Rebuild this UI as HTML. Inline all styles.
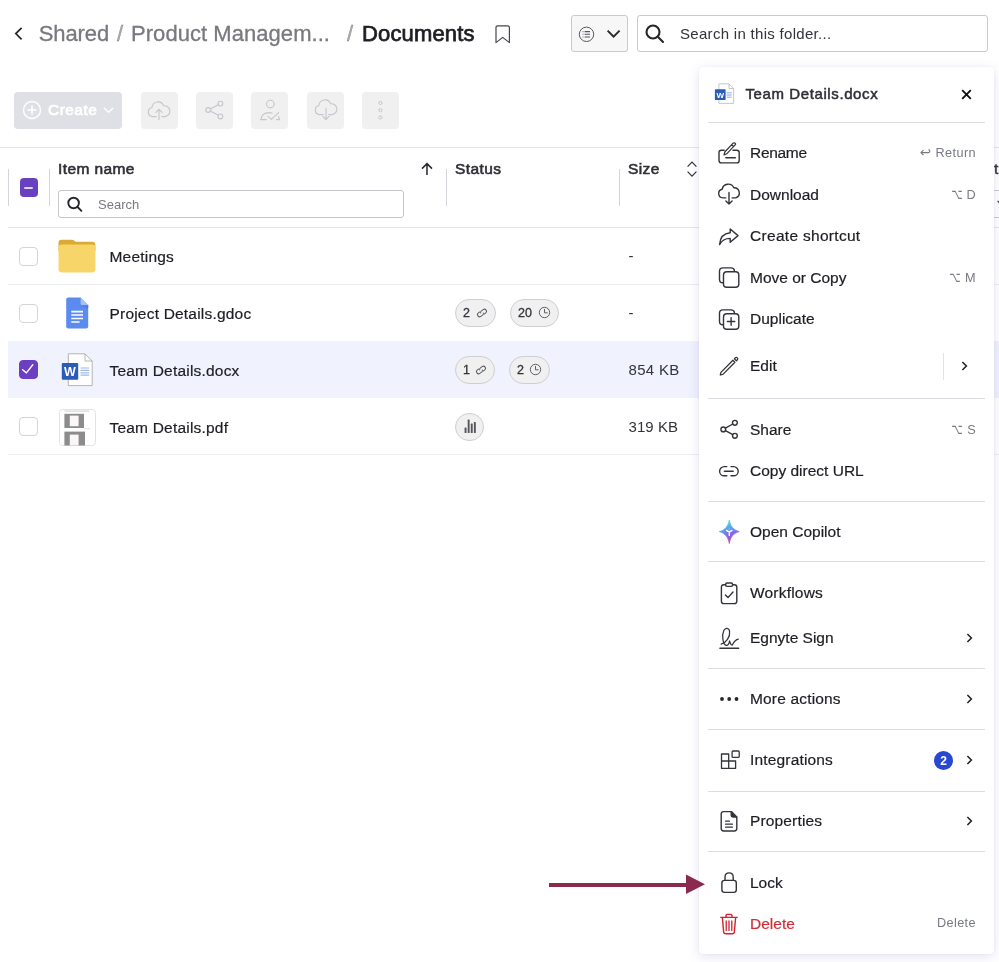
<!DOCTYPE html>
<html lang="en">
<head>
<meta charset="utf-8">
<title>Documents</title>
<style>
*{box-sizing:border-box;margin:0;padding:0}
html,body{width:999px;height:962px;overflow:hidden;background:#fff}
body{position:relative;will-change:transform;font-family:"Liberation Sans",sans-serif;color:#1d1e23;-webkit-font-smoothing:antialiased}
.a{position:absolute}
.t{position:absolute;white-space:nowrap;line-height:1}
svg{position:absolute;overflow:visible}
.bc{font-size:22px;color:#78797e;top:23px;-webkit-text-stroke:.3px #78797e}
.ibtn{position:absolute;top:91.5px;width:36.8px;height:37px;background:#f0f0f1;border-radius:4px}
.hl{position:absolute;background:#e4e4ea;height:1px}
.vl{position:absolute;background:#d4d5da;width:1px}
.cb{position:absolute;left:19px;width:19px;height:19px;border:1px solid #d3d4d9;border-radius:4px;background:#fff}
.nm{font-size:15.5px;left:109.5px;color:#1d1e23;letter-spacing:.2px;-webkit-text-stroke:.2px #1d1e23}
.pill{position:absolute;height:28px;border:1px solid #cfcfd2;background:#f0f0f1;border-radius:14px}
.pill .t{font-size:12.5px;top:7px;color:#33343a;-webkit-text-stroke:.3px #33343a}
.sz{font-size:15px;left:628.5px;margin-top:-1px;color:#33343a;letter-spacing:.3px}
#menu{position:absolute;left:699px;top:67px;width:295px;height:887px;background:#fff;border-radius:4px;box-shadow:0 3px 12px rgba(80,70,170,.15),0 0 2px rgba(80,70,170,.08);z-index:3}
#menu .sep{position:absolute;left:9px;width:277px;height:1px;background:#dcdce3}
#menu .mi{font-size:15.5px;left:51px;color:#1d1e23;-webkit-text-stroke:.2px}
#menu .kb{font-size:12.7px;color:#777a82;right:18px;margin-top:-.5px;letter-spacing:.4px}
#menu .sy{font-family:"DejaVu Sans",sans-serif;font-size:13.5px}
#menu .so{display:inline-block;transform:scale(.72,1.05);transform-origin:right 70%}
</style>
</head>
<body>

<!-- breadcrumb -->
<svg style="left:14px;top:26px" width="10" height="16" viewBox="0 0 10 16"><path d="M7.6 1.8 L1.8 7.6 L7.6 13.4" fill="none" stroke="#26272c" stroke-width="1.7"/></svg>
<div class="t bc" style="left:38.8px;letter-spacing:-.12px">Shared</div>
<div class="t bc" style="left:117px;color:#a9abb2">/</div>
<div class="t bc" style="left:131px;letter-spacing:.05px">Product Managem...</div>
<div class="t bc" style="left:347px;color:#a9abb2">/</div>
<div class="t bc" style="left:362px;color:#1d1e23;-webkit-text-stroke:.75px #1d1e23;letter-spacing:.15px">Documents</div>
<svg style="left:495px;top:25px" width="16" height="19" viewBox="0 0 16 19"><path d="M1 2.6 Q1 0.8 2.8 0.8 H12.6 Q14.4 0.8 14.4 2.6 V17.6 L7.7 12.4 L1 17.6 Z" fill="none" stroke="#45464c" stroke-width="1.2" stroke-linejoin="round"/></svg>

<!-- view toggle + search -->
<div class="a" style="left:571px;top:15px;width:57px;height:37px;border:1px solid #c9cad1;border-radius:3px;background:#f7f7f8"></div>
<div class="a" style="left:637px;top:15px;width:351px;height:37px;border:1px solid #c9cad1;border-radius:3px;background:#fff"></div>
<div class="t" style="left:680px;top:26px;font-size:15px;letter-spacing:.3px;color:#33343a">Search in this folder...</div>


<!-- view toggle / search icons -->
<svg style="left:578px;top:26px" width="17" height="17" viewBox="0 0 17 17" fill="none" stroke="#55575e" stroke-width="1"><circle cx="8.5" cy="8.3" r="7.2"/><path d="M6.6 5.6 H12 M6.6 8.3 H12 M6.6 11 H12" stroke-width="1.1"/><path d="M4.6 5.6 H5.4 M4.6 8.3 H5.4 M4.6 11 H5.4" stroke-width="1.1"/></svg>
<svg style="left:606px;top:29px" width="16" height="10" viewBox="0 0 16 10"><path d="M1.6 1.6 L7.6 7.6 L13.6 1.6" fill="none" stroke="#26272c" stroke-width="1.9"/></svg>
<svg style="left:644px;top:23px" width="22" height="22" viewBox="0 0 22 22" fill="none" stroke="#26272c" stroke-width="2.1" stroke-linecap="round"><circle cx="9" cy="9" r="6.5"/><path d="M13.8 13.8 L19 19"/></svg>

<!-- toolbar -->
<div class="a" style="left:14px;top:91.5px;width:108px;height:37px;background:#dfe0e6;border-radius:4px"></div>
<div class="t" style="left:48px;top:102px;font-size:15.5px;letter-spacing:.45px;-webkit-text-stroke:.65px #fff;color:#fff">Create</div>
<div class="ibtn" style="left:141px"></div>
<div class="ibtn" style="left:196.2px"></div>
<div class="ibtn" style="left:251.4px"></div>
<div class="ibtn" style="left:306.8px"></div>
<div class="ibtn" style="left:362.2px"></div>


<!-- toolbar icons -->
<svg style="left:21.2px;top:99px" width="22" height="22" viewBox="0 0 22 22"><circle cx="11" cy="11" r="8.5" fill="none" stroke="#fff" stroke-width="1.4"/><path d="M11 7 V15 M7 11 H15" stroke="#fff" stroke-width="1.5" fill="none" stroke-linecap="round"/></svg>
<svg style="left:103px;top:106px" width="12" height="8" viewBox="0 0 12 8"><path d="M1.4 2.2 L5.6 6.2 L9.8 2.2" fill="none" stroke="#fff" stroke-width="1.3" stroke-linecap="round" stroke-linejoin="round"/></svg>
<svg style="left:147px;top:98px" width="24" height="24" viewBox="0 0 24 24" fill="none" stroke="#c6c7cc" stroke-width="1.15" stroke-linecap="round" stroke-linejoin="round"><path d="M9.2 18.6 H5.8 A4.6 4.6 0 0 1 5 9.5 A6 6 0 0 1 16.6 7.8 A5.4 5.4 0 0 1 18.2 18.6 H14.8"/><path d="M12 21.4 V11.4 M8.9 14.4 L12 11.3 L15.1 14.4"/></svg>
<svg style="left:202px;top:98px" width="24" height="24" viewBox="0 0 24 24" fill="none" stroke="#c6c7cc" stroke-width="1.15"><circle cx="18.4" cy="5.6" r="2.4"/><circle cx="6.2" cy="12" r="2.4"/><circle cx="18.4" cy="18.4" r="2.4"/><path d="M8.3 10.9 L16.3 6.7 M8.3 13.1 L16.3 17.3"/></svg>
<svg style="left:258px;top:98px" width="24" height="24" viewBox="0 0 24 24" fill="none" stroke="#c6c7cc" stroke-width="1.15" stroke-linecap="round" stroke-linejoin="round"><circle cx="12.3" cy="6" r="3.8"/><path d="M3 21.6 C3.4 17.2 6.6 14.6 11 14.6 C12.2 14.6 13.2 14.8 14.2 15.2"/><path d="M3 21.6 H8.2 M10 18.4 L13.4 21.4 L20.6 14.6 M18.4 21.6 H21.4 C21.3 20.4 21 19.4 20.6 18.6"/></svg>
<svg style="left:313.5px;top:98px" width="24" height="24" viewBox="0 0 24 24" fill="none" stroke="#c6c7cc" stroke-width="1.15" stroke-linecap="round" stroke-linejoin="round"><path d="M9.2 16.6 H5.8 A4.6 4.6 0 0 1 5 7.5 A6 6 0 0 1 16.6 5.8 A5.4 5.4 0 0 1 18.2 16.6 H14.8"/><path d="M12 10.4 V21.4 M8.9 18.4 L12 21.5 L15.1 18.4"/></svg>
<svg style="left:368.2px;top:98px" width="24" height="24" viewBox="0 0 24 24" fill="none" stroke="#c6c7cc" stroke-width="1"><circle cx="12.4" cy="4.9" r="1.6"/><circle cx="12.4" cy="12.2" r="1.6"/><circle cx="12.4" cy="19.4" r="1.6"/></svg>

<!-- table header -->
<div class="hl" style="left:0;top:147px;width:999px"></div>
<div class="hl" style="left:8px;top:227px;width:991px"></div>
<div class="vl" style="left:8px;top:169px;height:37px"></div>
<div class="vl" style="left:49px;top:169px;height:37px"></div>
<div class="vl" style="left:446px;top:169px;height:37px"></div>
<div class="vl" style="left:619px;top:169px;height:37px"></div>
<div class="a" style="left:19.5px;top:178px;width:18.5px;height:19px;background:#6741bf;border-radius:4px"></div>
<div class="a" style="left:24px;top:187px;width:9px;height:1.5px;background:#ddd3f6;border-radius:1px"></div>
<div class="t" style="left:58px;top:161px;font-size:15.5px;letter-spacing:.4px;-webkit-text-stroke:.6px #2e2f35;color:#2e2f35">Item name</div>
<div class="a" style="left:58px;top:190px;width:346px;height:27.5px;border:1px solid #c4c5ca;border-radius:3px;background:#fff"></div>
<div class="t" style="left:98px;top:197.5px;font-size:13px;color:#777a82">Search</div>
<div class="t" style="left:455px;top:161px;font-size:15.5px;letter-spacing:.4px;-webkit-text-stroke:.6px #2e2f35;color:#2e2f35">Status</div>
<div class="t" style="left:628px;top:161px;font-size:15.5px;letter-spacing:.4px;-webkit-text-stroke:.6px #2e2f35;color:#2e2f35">Size</div>


<!-- header icons -->
<svg style="left:66px;top:196px" width="17" height="17" viewBox="0 0 17 17" fill="none" stroke="#26272c" stroke-width="1.9" stroke-linecap="round"><circle cx="7.6" cy="7" r="5.3"/><path d="M11.6 11 L15.4 14.8"/></svg>
<svg style="left:420px;top:162px" width="14" height="14" viewBox="0 0 14 14" fill="none" stroke="#26272c" stroke-width="1.5"><path d="M7 13 V2 M2 6.6 L7 1.6 L12 6.6"/></svg>
<svg style="left:686px;top:160px" width="12" height="18" viewBox="0 0 12 18" fill="none" stroke="#33343a" stroke-width="1.2"><path d="M1.6 6.6 L6 2 L10.4 6.6 M1.6 11.6 L6 16.2 L10.4 11.6"/></svg>


<!-- partially hidden column at right edge -->
<div class="t" style="left:994px;top:161px;font-size:15.5px;-webkit-text-stroke:.5px #33343a;color:#33343a">t</div>
<div class="a" style="left:960px;top:190px;width:60px;height:28px;border:1px solid #c9cad1;border-radius:3px;background:#fff"></div>
<svg style="left:996.5px;top:200px" width="8" height="6" viewBox="0 0 8 6"><path d="M0.6 0.8 L4 4.4 L7.4 0.8" fill="none" stroke="#33343a" stroke-width="1.2"/></svg>

<!-- rows -->
<div class="a" style="left:8px;top:341px;width:991px;height:57px;background:#f0f2fd"></div>
<div class="hl" style="left:8px;top:284px;width:991px;background:#ececf1"></div>
<div class="hl" style="left:8px;top:454px;width:991px;background:#ececf1"></div>

<div class="cb" style="top:247px"></div>
<div class="cb" style="top:304px"></div>
<div class="cb" style="top:360px;background:#6b3ec2;border-color:#6b3ec2"></div>
<div class="cb" style="top:417px"></div>

<div class="t nm" style="top:249px">Meetings</div>
<div class="t nm" style="top:306px">Project Details.gdoc</div>
<div class="t nm" style="top:363px">Team Details.docx</div>
<div class="t nm" style="top:420px">Team Details.pdf</div>

<div class="pill" style="left:455px;top:299px;width:41px"><div class="t" style="left:7px">2</div><svg style="left:20px;top:6.5px" width="12" height="12" viewBox="0 0 13 13" fill="none" stroke="#5a5b61" stroke-width="1.05" stroke-linecap="round"><g transform="rotate(-35 6.5 6.5)"><path d="M5.2 4.2 H3.4 A2.3 2.3 0 0 0 3.4 8.8 H5.6 A2.3 2.3 0 0 0 7.7 7.4"/><path d="M7.8 8.8 H9.6 A2.3 2.3 0 0 0 9.6 4.2 H7.4 A2.3 2.3 0 0 0 5.3 5.6"/></g></svg></div>
<div class="pill" style="left:510px;top:299px;width:49px"><div class="t" style="left:7px">20</div><svg style="left:27.2px;top:6px" width="13" height="13" viewBox="0 0 13 13" fill="none" stroke="#5e5f65" stroke-width="1"><circle cx="6.5" cy="6.5" r="5.2"/><path d="M6.5 3 V6.8 H9.6"/></svg></div>
<div class="pill" style="left:455px;top:356px;width:40px"><div class="t" style="left:7px">1</div><svg style="left:19px;top:6.5px" width="12" height="12" viewBox="0 0 13 13" fill="none" stroke="#5a5b61" stroke-width="1.05" stroke-linecap="round"><g transform="rotate(-35 6.5 6.5)"><path d="M5.2 4.2 H3.4 A2.3 2.3 0 0 0 3.4 8.8 H5.6 A2.3 2.3 0 0 0 7.7 7.4"/><path d="M7.8 8.8 H9.6 A2.3 2.3 0 0 0 9.6 4.2 H7.4 A2.3 2.3 0 0 0 5.3 5.6"/></g></svg></div>
<div class="pill" style="left:509px;top:356px;width:41px"><div class="t" style="left:7px">2</div><svg style="left:19.2px;top:6px" width="13" height="13" viewBox="0 0 13 13" fill="none" stroke="#5e5f65" stroke-width="1"><circle cx="6.5" cy="6.5" r="5.2"/><path d="M6.5 3 V6.8 H9.6"/></svg></div>
<div class="pill" style="left:455px;top:413px;width:29px;height:28px;border-radius:14px"><svg style="left:8px;top:5.2px" width="13" height="15" viewBox="0 0 13 15" fill="#55565c"><rect x="0.6" y="8.6" width="1.9" height="5.4" rx=".6"/><rect x="3.7" y="0.6" width="1.9" height="13.4" rx=".6"/><rect x="6.8" y="4.6" width="1.9" height="9.4" rx=".6"/><rect x="9.9" y="3" width="1.9" height="11" rx=".6"/></svg></div>

<div class="t sz" style="top:249px">-</div>
<div class="t sz" style="top:306px">-</div>
<div class="t sz" style="top:363px">854 KB</div>
<div class="t sz" style="top:420px;letter-spacing:.05px">319 KB</div>


<!-- file icons -->
<svg style="left:58px;top:239px" width="38" height="34" viewBox="0 0 38 34"><path d="M0.5 4 Q0.5 0.8 3.6 0.8 H13.6 Q15.4 0.8 16.6 2 L17.4 2.8 H34 Q37.4 2.8 37.4 6 V12 H0.5 Z" fill="#dcaa33"/><rect x="0.5" y="5.6" width="36.9" height="27.8" rx="3.4" fill="#f7d568"/></svg>
<svg style="left:66px;top:297px" width="23" height="32" viewBox="0 0 23 32"><path d="M2.2 0.6 H14.6 L22.2 8.2 V29.4 Q22.2 31.4 20.2 31.4 H2.2 Q0.2 31.4 0.2 29.4 V2.6 Q0.2 0.6 2.2 0.6 Z" fill="#5b8bef"/><path d="M14.6 0.6 L22.2 8.2 H16.4 Q14.6 8.2 14.6 6.4 Z" fill="#a6c1f7"/><path d="M14.6 8.2 H22.2 V11.4 Z" fill="#4a74d2" opacity=".7"/><path d="M5.3 14.6 H17 M5.3 18 H17 M5.3 21.5 H17 M5.3 25 H13.6" stroke="#fff" stroke-width="1.7"/></svg>
<svg style="left:61px;top:353px" width="33" height="34" viewBox="0 0 33 34"><path d="M7.3 0.8 H24 L31.2 8 V32.6 H7.3 Z" fill="#fff" stroke="#adadad" stroke-width="0.9" stroke-linejoin="round"/><path d="M24 0.8 V8 H31.2" fill="none" stroke="#adadad" stroke-width="0.9"/><path d="M19.6 15 H28.2 M19.6 17.4 H28.2 M19.6 19.8 H28.2 M19.6 22.2 H28.2" stroke="#9db9ea" stroke-width="1.2"/><rect x="0.8" y="10" width="16.4" height="16.8" rx="1" fill="#2b5cb8"/><text x="9" y="23" text-anchor="middle" font-family="Liberation Sans, sans-serif" font-weight="bold" font-size="12.5" fill="#fff">W</text></svg>
<svg style="left:59px;top:409px" width="37" height="37" viewBox="0 0 37 37"><defs><clipPath id="pc"><rect x="0.5" y="0.5" width="36" height="36" rx="3"/></clipPath></defs><rect x="0.5" y="0.5" width="36" height="36" rx="3" fill="#fff" stroke="#e3e3e6"/><g clip-path="url(#pc)"><rect x="5.4" y="1.6" width="25" height="1" fill="#cfcfcf"/><rect x="5.4" y="4.8" width="19.6" height="14.2" fill="#8c8c8c"/><rect x="10.8" y="6.6" width="8.8" height="10.6" fill="#fbf7f7"/><rect x="25" y="19.4" width="6" height="0.8" fill="#d8d8d8"/><rect x="5.4" y="22.6" width="20.6" height="15" fill="#8c8c8c"/><rect x="10.8" y="25.6" width="8.8" height="12" fill="#fbf7f7"/></g></svg>
<svg style="left:19px;top:360px" width="19" height="19" viewBox="0 0 19 19"><path d="M3.6 9.8 L7.4 12.9 L13.8 4.8" fill="none" stroke="#fff" stroke-width="1.4" stroke-linecap="round" stroke-linejoin="round"/></svg>

<!-- arrow annotation -->
<div class="a" style="left:549px;top:882.8px;width:140px;height:3.8px;background:#8b2a4f;z-index:5"></div>
<svg style="left:686px;top:874px;z-index:5" width="20" height="20" viewBox="0 0 20 20"><path d="M0 0.6 L19 10.3 L0 20 Z" fill="#8b2a4f"/></svg>

<!-- context menu -->
<div id="menu">
  <!-- menu icons (coords relative to menu at 699,67) -->
  <svg style="left:15px;top:16px" width="22" height="22" viewBox="0 0 22 22"><path d="M4.9 0.9 H15 L19.6 5.5 V20.4 H4.9 Z" fill="#fff" stroke="#b9b9b9" stroke-width="0.8" stroke-linejoin="round"/><path d="M15 0.9 V5.5 H19.6" fill="none" stroke="#b9b9b9" stroke-width="0.8"/><path d="M12.6 9.6 H17.6 M12.6 11.2 H17.6 M12.6 12.8 H17.6 M12.6 14.4 H17.6" stroke="#9db9ea" stroke-width="0.9"/><rect x="0.9" y="6.2" width="10.7" height="10.9" rx=".6" fill="#2b5cb8"/><text x="6.2" y="14.6" text-anchor="middle" font-family="Liberation Sans, sans-serif" font-weight="bold" font-size="8" fill="#fff">W</text></svg>
  <svg style="left:262px;top:22px" width="11" height="11" viewBox="0 0 11 11"><path d="M1.2 1.2 L9.8 9.8 M9.8 1.2 L1.2 9.8" stroke="#111" stroke-width="1.9" fill="none"/></svg>

  <svg style="left:18px;top:74px" width="24" height="24" viewBox="0 0 24 24" fill="none" stroke="#33343a" stroke-width="1.4" stroke-linecap="round" stroke-linejoin="round"><path d="M7.2 9.3 H4.4 Q2 9.3 2 11.7 V19.5 Q2 21.9 4.4 21.9 H19.8 Q22.2 21.9 22.2 19.5 V11.7 Q22.2 9.3 19.8 9.3 H16"/><path d="M8.8 16.7 H18.4"/><path d="M7 13.9 L7.8 11 L15.9 2.3 Q17.2 1.3 18.3 2.3 Q19.1 3.2 17.9 4.1 L9.7 12.8 Z M14.6 3.7 L16.5 5.5" stroke-width="1.2"/></svg>
  <svg style="left:18px;top:116px" width="24" height="24" viewBox="0 0 24 24" fill="none" stroke="#33343a" stroke-width="1.4" stroke-linecap="round" stroke-linejoin="round"><path d="M8.8 14.9 H5.8 A4.4 4.4 0 0 1 5.2 6.2 A6.1 6.1 0 0 1 16.8 4.8 A5.2 5.2 0 0 1 18.8 14.9 H15.2"/><path d="M12 9.4 V21 M8.9 18 L12 21.1 L15.1 18"/></svg>
  <svg style="left:19px;top:159.7px" width="22" height="20" viewBox="0 0 22 20" fill="none" stroke="#33343a" stroke-width="1.4" stroke-linecap="round" stroke-linejoin="round"><path d="M12.2 2 L20 8.6 L12.2 15.2 V11.4 C7.4 11.4 3.8 13.2 1.6 17.6 C2 11 5.8 6.4 12.2 5.8 Z"/></svg>
  <svg style="left:19px;top:199px" width="22" height="22" viewBox="0 0 22 22" fill="none" stroke="#33343a" stroke-width="1.4" stroke-linecap="round" stroke-linejoin="round"><path d="M4.8 16.8 Q1.5 16.6 1.5 13.4 V5.2 Q1.5 1.9 4.8 1.9 H13 Q16.2 1.9 16.5 5"/><rect x="5.5" y="5.7" width="15.3" height="15.6" rx="3.2"/></svg>
  <svg style="left:19px;top:240.5px" width="22" height="22" viewBox="0 0 22 22" fill="none" stroke="#33343a" stroke-width="1.4" stroke-linecap="round" stroke-linejoin="round"><path d="M4.8 16.8 Q1.5 16.6 1.5 13.4 V5.2 Q1.5 1.9 4.8 1.9 H13 Q16.2 1.9 16.5 5"/><rect x="5.5" y="5.7" width="15.3" height="15.6" rx="3.2"/><path d="M13.1 9.8 V17.2 M9.4 13.5 H16.8"/></svg>
  <svg style="left:19px;top:288px" width="22" height="22" viewBox="0 0 22 22" fill="none" stroke="#33343a" stroke-linecap="round" stroke-linejoin="round" stroke-width="1.25"><path d="M2.3 20 L2.9 17.4 L14.9 5.2 L16.9 7.2 L4.9 19.4 Z"/><path d="M16.4 3.8 L17.4 2.8 Q18.4 2 19.4 2.9 Q20.2 3.8 19.4 4.8 L18.4 5.8 Z"/></svg>

  <svg style="left:19px;top:351px" width="22" height="22" viewBox="0 0 22 22" fill="none" stroke="#33343a" stroke-width="1.4" stroke-linecap="round" stroke-linejoin="round"><circle cx="16.9" cy="4.8" r="2.4"/><circle cx="5.3" cy="11.4" r="2.4"/><circle cx="16.9" cy="17.8" r="2.4"/><path d="M7.4 10.2 L14.8 6 M7.4 12.6 L14.8 16.6"/></svg>
  <svg style="left:19px;top:396.8px" width="22" height="14" viewBox="0 0 22 14" fill="none" stroke="#33343a" stroke-width="1.4" stroke-linecap="round" stroke-linejoin="round"><path d="M8.8 2.6 H6.2 A4.6 4.6 0 0 0 6.2 11.8 H8.8 M13 2.6 H15.6 A4.6 4.6 0 0 1 15.6 11.8 H13 M6.4 7.2 H15.2"/></svg>
  <svg style="left:18px;top:452px" width="24" height="26" viewBox="0 0 24 26"><defs><linearGradient id="cg" gradientUnits="userSpaceOnUse" x1="9" y1="1" x2="15.5" y2="24.4"><stop offset="0" stop-color="#4fe2e4"/><stop offset=".36" stop-color="#58a2f0"/><stop offset=".6" stop-color="#7f6af2"/><stop offset=".8" stop-color="#a653c6"/><stop offset="1" stop-color="#cf3d55"/></linearGradient></defs><path d="M12.3 0.9 C13.2 6.6 16.2 11 22.2 12.6 C16.2 14.2 13.2 18.6 12.3 24.4 C11.4 18.6 8.4 14.2 2.4 12.6 C8.4 11 11.4 6.6 12.3 0.9 Z" fill="url(#cg)" stroke="url(#cg)" stroke-width=".8" stroke-linejoin="round"/><path d="M12.3 13 V16.4 M9.6 11.4 L12.3 13.2 L15 11.4" stroke="#fff" stroke-width="1.4" stroke-linecap="round" fill="none"/><circle cx="12.3" cy="10" r=".6" fill="#fff" opacity=".7"/></svg>

  <svg style="left:20px;top:513.9px" width="20" height="24" viewBox="0 0 20 24" fill="none" stroke="#33343a" stroke-width="1.4" stroke-linecap="round" stroke-linejoin="round"><path d="M6.6 3.8 H4.8 Q2.4 3.8 2.4 6.2 V20.2 Q2.4 22.6 4.8 22.6 H15.4 Q17.8 22.6 17.8 20.2 V6.2 Q17.8 3.8 15.4 3.8 H13.6"/><rect x="6.6" y="2" width="7" height="3.4" rx="1.4"/><path d="M6.4 14 L9 16.6 L14 11"/></svg>
  <svg style="left:19px;top:558px" width="22" height="26" viewBox="0 0 22 26" fill="none" stroke="#33343a" stroke-width="1.4" stroke-linecap="round" stroke-linejoin="round"><path d="M2 23.3 H20.6" stroke-width="1.6"/><path d="M3.2 19.2 C8 17.6 12.4 12 11.6 6.6 C11.2 2.6 7.4 2.2 5.8 5.6 C3.6 10.6 4.8 19.6 8.4 20.4 C10.4 20.6 11.2 18 11.6 15.8 C12 18 13 20.4 14.4 20 C15.6 17 17.6 15 20.3 14.2" stroke-width="1.25"/></svg>
  <svg style="left:19px;top:626px" width="22" height="12" viewBox="0 0 22 12" fill="#26272c"><circle cx="4" cy="6" r="1.9"/><circle cx="11.2" cy="6" r="1.9"/><circle cx="18.5" cy="6" r="1.9"/></svg>
  <svg style="left:20px;top:681px" width="22" height="22" viewBox="0 0 22 22" fill="none" stroke="#33343a" stroke-width="1.3" stroke-linejoin="round"><path d="M2.5 6 H9.7 V13 H16.6 V20.3 H2.5 Z M2.5 13 H9.7 V20.3"/><rect x="13.1" y="3" width="7.1" height="6.4" rx="1"/></svg>
  <svg style="left:20px;top:742px" width="20" height="24" viewBox="0 0 20 24" fill="none" stroke="#33343a" stroke-width="1.4" stroke-linecap="round" stroke-linejoin="round"><path d="M4.6 2.6 H12.4 L17.8 8 V19.6 Q17.8 22 15.4 22 H4.6 Q2.2 22 2.2 19.6 V5 Q2.2 2.6 4.6 2.6 Z"/><path d="M12.2 2.8 V5.8 Q12.2 8 14.4 8 H17.6" fill="#33343a"/><path d="M6.6 12.2 H10.4 M6.6 15.2 H13.4 M6.6 18.2 H13.4" stroke-width="1.3"/></svg>
  <svg style="left:20px;top:803px" width="20" height="24" viewBox="0 0 20 24" fill="none" stroke="#33343a" stroke-width="1.4" stroke-linecap="round" stroke-linejoin="round"><rect x="2.9" y="10.4" width="14.4" height="12" rx="2.6"/><path d="M6 10.2 V7.2 Q6 2.9 10.1 2.9 Q14.2 2.9 14.2 7.2 V10.2"/></svg>
  <svg style="left:20px;top:845px" width="20" height="24" viewBox="0 0 20 24" fill="none" stroke="#d0222f" stroke-width="1.4" stroke-linecap="round" stroke-linejoin="round"><path d="M1.8 5.4 H18.2 M7 5.2 V3.6 Q7 2.4 8.2 2.4 H11.8 Q13 2.4 13 3.6 V5.2"/><path d="M3.4 5.6 L4.6 19.8 Q4.8 21.8 6.8 21.8 H13.2 Q15.2 21.8 15.4 19.8 L16.6 5.6"/><path d="M7.2 8.8 V18.4 M10 8.8 V18.4 M12.8 8.8 V18.4" stroke-width="1.3"/></svg>

  <div class="t" style="left:46.5px;top:19px;font-size:15px;letter-spacing:.6px;-webkit-text-stroke:.5px #2e2f35;color:#2e2f35">Team Details.docx</div>
  <div class="sep" style="top:55px"></div>
  <div class="t mi" style="top:78px;letter-spacing:-.3px">Rename</div>
  <div class="t kb" style="top:79px"><span class="sy">↩</span> Return</div>
  <div class="t mi" style="top:120px">Download</div>
  <div class="t kb" style="top:121px"><span class="sy so">⌥</span> D</div>
  <div class="t mi" style="top:161px;letter-spacing:.3px">Create shortcut</div>
  <div class="t mi" style="top:203px">Move or Copy</div>
  <div class="t kb" style="top:204px"><span class="sy so">⌥</span> M</div>
  <div class="t mi" style="top:244px">Duplicate</div>
  <div class="t mi" style="top:291px">Edit</div>
  <div class="sep" style="top:331px"></div>
  <div class="t mi" style="top:355px">Share</div>
  <div class="t kb" style="top:356px"><span class="sy so">⌥</span> S</div>
  <div class="t mi" style="top:396px">Copy direct URL</div>
  <div class="sep" style="top:433.5px"></div>
  <div class="t mi" style="top:457px">Open Copilot</div>
  <div class="sep" style="top:494px"></div>
  <div class="t mi" style="top:518px;letter-spacing:.2px">Workflows</div>
  <div class="t mi" style="top:563px">Egnyte Sign</div>
  <div class="sep" style="top:601px"></div>
  <div class="t mi" style="top:624px;letter-spacing:.17px">More actions</div>
  <div class="sep" style="top:662px"></div>
  <div class="t mi" style="top:685px;letter-spacing:.17px">Integrations</div>
  <div class="sep" style="top:723.5px"></div>
  <div class="t mi" style="top:746px;letter-spacing:.15px">Properties</div>
  <div class="sep" style="top:784px"></div>
  <div class="t mi" style="top:808px">Lock</div>
  <div class="t mi" style="top:849px;color:#d02d36">Delete</div>
  <div class="t kb" style="top:850px">Delete</div>

  <!-- chevrons etc -->
  <div class="a" style="left:244px;top:286px;width:1px;height:27px;background:#e2e2e8"></div>
  <svg style="left:262px;top:293px" width="8" height="12" viewBox="0 0 8 12"><path d="M1.4 1.9 L5.4 6 L1.4 10.1" fill="none" stroke="#1d1e23" stroke-width="1.5"/></svg>
  <svg style="left:266.5px;top:565px" width="8" height="12" viewBox="0 0 8 12"><path d="M1.4 1.9 L5.4 6 L1.4 10.1" fill="none" stroke="#1d1e23" stroke-width="1.5"/></svg>
  <svg style="left:266.5px;top:626px" width="8" height="12" viewBox="0 0 8 12"><path d="M1.4 1.9 L5.4 6 L1.4 10.1" fill="none" stroke="#1d1e23" stroke-width="1.5"/></svg>
  <svg style="left:266.5px;top:687px" width="8" height="12" viewBox="0 0 8 12"><path d="M1.4 1.9 L5.4 6 L1.4 10.1" fill="none" stroke="#1d1e23" stroke-width="1.5"/></svg>
  <svg style="left:266.5px;top:748px" width="8" height="12" viewBox="0 0 8 12"><path d="M1.4 1.9 L5.4 6 L1.4 10.1" fill="none" stroke="#1d1e23" stroke-width="1.5"/></svg>
  <div class="a" style="left:235px;top:684px;width:19px;height:19px;border-radius:50%;background:#2748d3"></div>
  <div class="t" style="left:235px;top:688px;width:19px;text-align:center;font-size:12px;font-weight:bold;color:#fff">2</div>
</div>

</body>
</html>
